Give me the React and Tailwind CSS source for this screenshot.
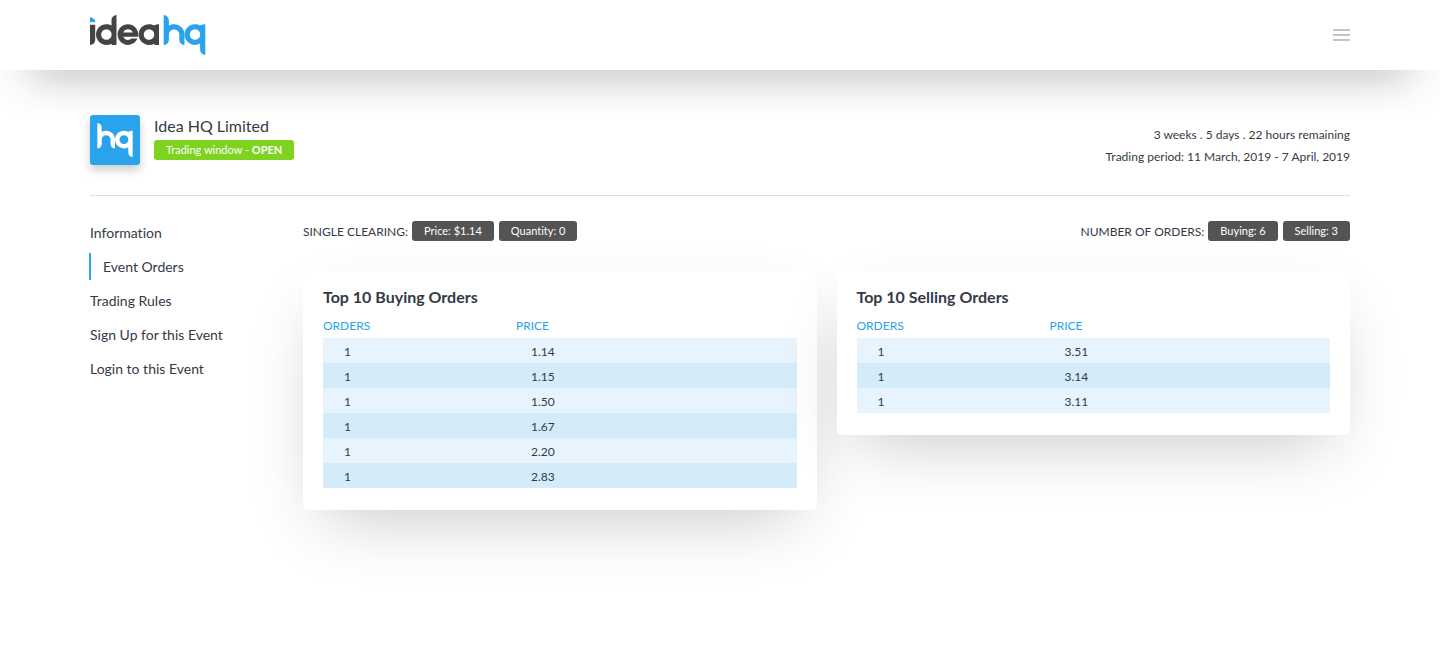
const navItems = [
  { label: 'Information' },
  { label: 'Event Orders', active: true },
  { label: 'Trading Rules' },
  { label: 'Sign Up for this Event' },
  { label: 'Login to this Event' },
];

const buying = ['1.14', '1.15', '1.50', '1.67', '2.20', '2.83'];
const selling = ['3.51', '3.14', '3.11'];

function HqMark() {
  return (
    <>
      <path d="M73.7 0c3 .3 5.2 2.4 5.2 5.4V10.600c1.500-.9 3.200-1.400 5.100-1.400 5.900 0 10.500 4.500 10.500 10.300V30c-3-.2-5.200-2.300-5.200-5.300v-5.200c0-2.900-2.300-5.100-5.200-5.100s-5.200 2.200-5.200 5.100v5.200c0 3-2.200 5.100-5.200 5.300z" />
      <path
        fillRule="evenodd"
        d="M105 9.200c1.900 0 3.600.5 5.100 1.400.9-.8 2.800-1.400 5.200-1.400V40c-3-.3-5.200-2.400-5.200-5.400v-6.100c-1.500.9-3.200 1.400-5.100 1.400-5.800 0-10.400-4.600-10.400-10.350S99.200 9.200 105 9.200zm0 5.100a5.250 5.250 0 1 0 0 10.500 5.250 5.250 0 0 0 0-10.500z"
      />
    </>
  );
}

function Logo() {
  return (
    <svg width="116" height="40" viewBox="0 0 116 40" role="img" aria-label="ideahq">
      <g fill="#29a3ec">
        <path d="M0 2.300c3 .2 5.200 2 5.200 4.900H0z" />
        <HqMark />
      </g>
      <g fill="#444" fillRule="evenodd">
        <path d="M0 9.800h5.200v14.900c0 3-2.200 5-5.200 5.300z" />
        <path d="M26.500 0v30h-4.200l-1-1c-1.500.6-3.200.9-5.100.9C10.600 29.900 6 25.300 6 19.550S10.600 9.200 16.400 9.200c1.900 0 3.600.5 5.100 1.400V5.400c0-3 2.200-5.100 5-5.400zM16.400 14.300a5.250 5.250 0 1 0 0 10.500 5.250 5.250 0 0 0 0-10.500z" />
        <path d="M38 9.200c5.700 0 10.200 4.500 10.200 10.200v2.300H33.200c.8 1.900 2.600 3.200 4.800 3.200 1.400 0 2.600-.5 3.500-1.300h6c-1.600 3.800-5.200 6.300-9.500 6.300-5.800 0-10.400-4.600-10.400-10.350S32.200 9.200 38 9.200zm-4.700 8.200h9.400c-.8-1.900-2.600-3.100-4.700-3.100s-3.900 1.200-4.700 3.100z" />
        <path d="M59 9.200c1.900 0 3.600.5 5.100 1.400.9-.8 2.600-1.400 4.900-1.400V30h-4l-1-1c-1.500.6-3.200.9-5 .9-5.800 0-10.400-4.600-10.400-10.350S53.200 9.200 59 9.200zm0 5.100a5.250 5.250 0 1 0 0 10.500 5.250 5.250 0 0 0 0-10.500z" />
      </g>
    </svg>
  );
}

function Pill({ children }) {
  return (
    <span className="rounded-[3px] bg-[#545454] px-3 text-[11px] leading-5 text-white">{children}</span>
  );
}

function PillGroup({ label, pills }) {
  return (
    <div className="flex items-start gap-1">
      <span className="leading-[22px]">{label}</span>
      <div className="flex gap-[5px]">
        {pills.map((pill) => (
          <Pill key={pill}>{pill}</Pill>
        ))}
      </div>
    </div>
  );
}

function OrdersCard({ title, prices }) {
  return (
    <section className="rounded-[5px] bg-white px-5 pt-4 pb-[22px] shadow-[0_25px_70px_-20px_rgba(0,0,0,0.23)]">
      <h2 className="text-base leading-5 font-bold">{title}</h2>
      <table className="mt-[6px] w-full table-fixed text-xs">
        <thead>
          <tr className="h-[25px] text-left text-[#29a3ec]">
            <th scope="col" className="w-[193px] p-0 font-normal">ORDERS</th>
            <th scope="col" className="p-0 font-normal">PRICE</th>
          </tr>
        </thead>
        <tbody>
          {prices.map((price) => (
            <tr key={price} className="h-[25px] odd:bg-[#e7f4fd] even:bg-[#d4ecfa]">
              <td className="py-0 pt-[2px] pl-[21px]">1</td>
              <td className="py-0 pt-[2px] pl-[15px]">{price}</td>
            </tr>
          ))}
        </tbody>
      </table>
    </section>
  );
}

export default function App() {
  return (
    <div className="min-h-screen overflow-x-hidden bg-white font-['Lato',sans-serif] text-[#343a45] [font-variant-ligatures:none]">
      <header className="flex h-[70px] items-center justify-between bg-white px-[90px] shadow-[0_27px_44px_-30px_rgba(0,0,0,0.85)]">
        <a href="#home" aria-label="Idea HQ home">
          <Logo />
        </a>
        <button type="button" aria-label="Menu" className="flex w-[17px] flex-col gap-[3px]">
          <span className="h-[2px] bg-[#c4c4c4]" />
          <span className="h-[2px] bg-[#c4c4c4]" />
          <span className="h-[2px] bg-[#c4c4c4]" />
        </button>
      </header>

      <main className="px-[90px] pt-[45px] pb-16">
        <div className="flex justify-between border-b border-[#dedede] pb-[27px]">
          <div className="flex gap-[14px]">
            <div className="flex size-[50px] items-center justify-center rounded-[3px] bg-[#29a3ec] shadow-[0_5px_10px_rgba(0,0,0,0.2)]">
              <svg width="36" height="34" viewBox="73.500 0 42 40" fill="#fff" role="img" aria-label="hq">
                <HqMark />
              </svg>
            </div>
            <div>
              <h1 className="mb-1 text-base leading-[21px]">Idea HQ Limited</h1>
              <p className="rounded-[3px] bg-[#7ed321] px-3 text-[11px] leading-5 text-white">
                Trading window - <b>OPEN</b>
              </p>
            </div>
          </div>
          <div className="pt-[9px] text-right text-xs leading-[22px]">
            <p>3 weeks . 5 days . 22 hours remaining</p>
            <p>Trading period: 11 March, 2019 - 7 April, 2019</p>
          </div>
        </div>

        <div className="flex">
          <nav className="w-[213px] shrink-0 pt-[23px]">
            <ul className="flex flex-col gap-[7px] text-sm leading-[27px]">
              {navItems.map((item) => (
                <li key={item.label}>
                  <a
                    href="#section"
                    className={item.active ? '-ml-px block border-l-2 border-[#29a3ec] pl-3' : 'block'}
                  >
                    {item.label}
                  </a>
                </li>
              ))}
            </ul>
          </nav>

          <div className="min-w-0 flex-1 pt-[25px]">
            <div className="flex justify-between text-xs">
              <PillGroup label="SINGLE CLEARING:" pills={['Price: $1.14', 'Quantity: 0']} />
              <PillGroup label="NUMBER OF ORDERS:" pills={['Buying: 6', 'Selling: 3']} />
            </div>
            <div className="mt-7 grid grid-cols-2 items-start gap-5">
              <OrdersCard title="Top 10 Buying Orders" prices={buying} />
              <OrdersCard title="Top 10 Selling Orders" prices={selling} />
            </div>
          </div>
        </div>
      </main>
    </div>
  );
}
